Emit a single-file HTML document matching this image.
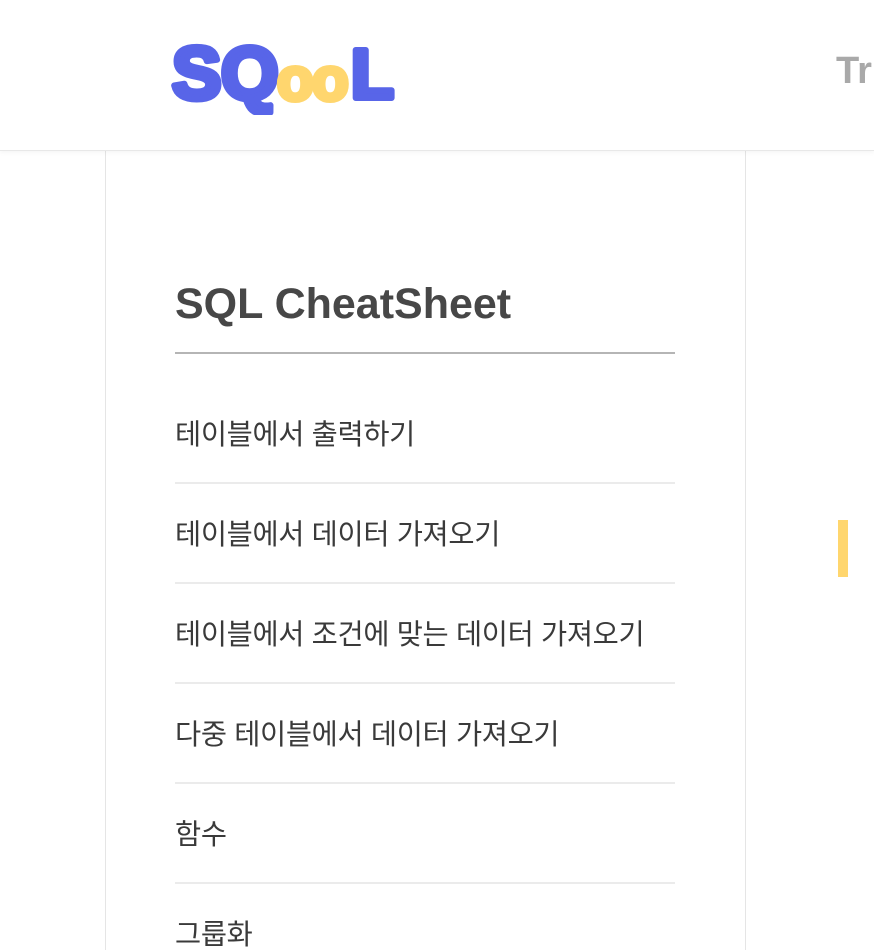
<!DOCTYPE html>
<html><head><meta charset="utf-8"><style>
body{margin:0;width:874px;height:922px;overflow:hidden;background:#fff;font-family:"Liberation Sans","Noto Sans CJK KR",sans-serif;position:relative}
.hdr{position:absolute;left:0;top:0;width:874px;height:150px;background:#fff;border-bottom:1px solid #e8e8e8;box-shadow:0 2px 4px rgba(0,0,0,.04);z-index:2}
.tr{position:absolute;left:836px;top:50px;font-size:38px;font-weight:bold;color:#a9a9a9}
.card{position:absolute;left:105px;top:150px;width:639px;height:800px;border-left:1px solid #e5e5e5;border-right:1px solid #e5e5e5}
h1{position:absolute;left:175px;top:280px;margin:0;font-size:43px;font-weight:bold;color:#474747;letter-spacing:0}
.hr{position:absolute;left:175px;top:352px;width:500px;height:2px;background:#b5b5b5}
.it{position:absolute;left:175px;font-size:28.4px;color:#3a3a3a;letter-spacing:-0.3px;line-height:30px}
.d{position:absolute;left:175px;width:500px;height:2px;background:#ebebeb}
.bar{position:absolute;left:838px;top:520px;width:10px;height:57px;background:#ffd66e}
</style></head><body>
<div class="hdr">
<svg width="260" height="90" style="position:absolute;left:165px;top:25px" viewBox="0 0 260 90">
<g font-family="Liberation Sans, sans-serif" font-weight="bold" stroke-linejoin="round">
<text x="7" y="74" font-size="74" fill="#5865e8" stroke="#5865e8" stroke-width="6">S</text>
<text x="56" y="74" font-size="74" fill="#5865e8" stroke="#5865e8" stroke-width="6">Q</text>
<text x="112" y="75" font-size="60" fill="#ffd66e" stroke="#ffd66e" stroke-width="5">o</text>
<text x="147" y="75" font-size="60" fill="#ffd66e" stroke="#ffd66e" stroke-width="5">o</text>
<text x="186" y="73" font-size="70" fill="#5865e8" stroke="#5865e8" stroke-width="6">L</text>
</g></svg>
<div class="tr">Tr</div>
</div>
<div class="card"></div>
<h1>SQL CheatSheet</h1>
<div class="hr"></div>
<div class="it" style="top:420px">테이블에서 출력하기</div>
<div class="d" style="top:482px"></div>
<div class="it" style="top:520px">테이블에서 데이터 가져오기</div>
<div class="d" style="top:582px"></div>
<div class="it" style="top:620px">테이블에서 조건에 맞는 데이터 가져오기</div>
<div class="d" style="top:682px"></div>
<div class="it" style="top:720px">다중 테이블에서 데이터 가져오기</div>
<div class="d" style="top:782px"></div>
<div class="it" style="top:820px">함수</div>
<div class="d" style="top:882px"></div>
<div class="it" style="top:920px">그룹화</div>
<div class="bar"></div>
</body></html>
